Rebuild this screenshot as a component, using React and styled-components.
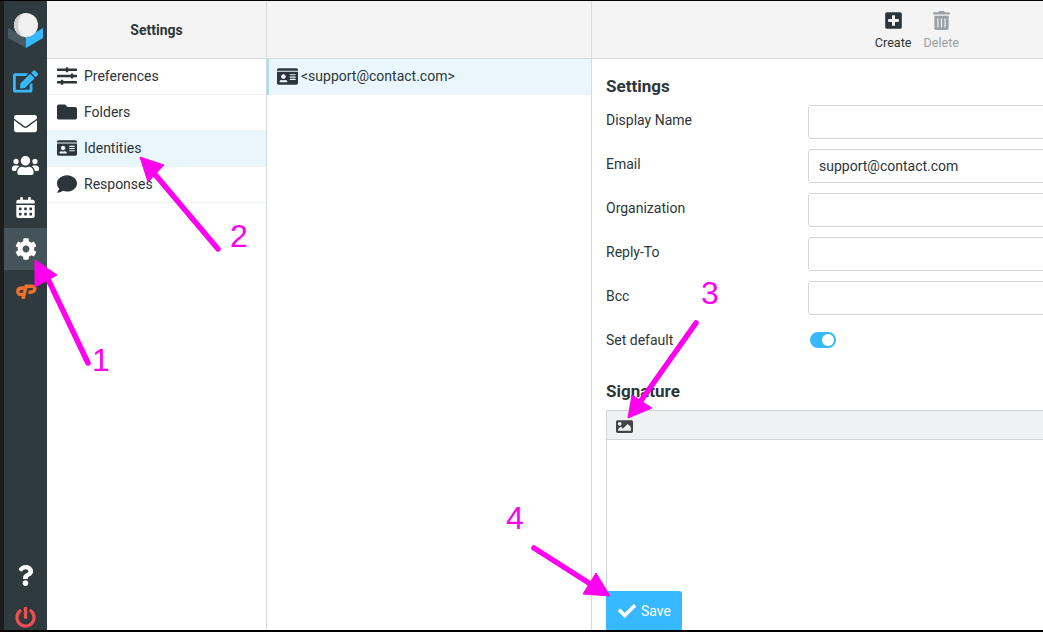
import styled, { createGlobalStyle } from "styled-components";
import {
  FaSlidersH,
  FaFolder,
  FaIdCard,
  FaComment,
  FaEdit,
  FaEnvelope,
  FaUsers,
  FaCalendarAlt,
  FaCog,
  FaQuestion,
  FaPowerOff,
  FaPlusSquare,
  FaTrashAlt,
  FaImage,
  FaCheck,
} from "react-icons/fa";

const GlobalStyle = createGlobalStyle`
  html, body { margin: 0; padding: 0; background: #fff; }
  body { font-family: Roboto, "Liberation Sans", sans-serif; font-size: 14px; color: #2c363a; }
  * { box-sizing: border-box; }
`;

const settingsItems = [
  { label: "Preferences", Icon: FaSlidersH },
  { label: "Folders", Icon: FaFolder },
  { label: "Identities", Icon: FaIdCard, active: true },
  { label: "Responses", Icon: FaComment },
];

const formRows = [
  { label: "Display Name", value: "" },
  { label: "Email", value: "support@contact.com" },
  { label: "Organization", value: "" },
  { label: "Reply-To", value: "" },
  { label: "Bcc", value: "" },
];

const Logo = () => (
  <svg width="36" height="36" viewBox="0 0 36 36">
    <path d="M0 16 L18 26 L18 36 L0 26 Z" fill="#4a5a62" />
    <path d="M18 26 L35 16 L35 26 L18 36 Z" fill="#37b9ff" />
    <circle cx="18" cy="13" r="12" fill="#f0f0f0" />
    <path d="M6 15 L18 26 L30 15 Z" fill="#f0f0f0" />
    <path d="M15 1.4 A12 12 0 0 0 15 24.6 A16 16 0 0 1 15 1.4 Z" fill="#cfcfcf" />
  </svg>
);

const CpanelLogo = () => (
  <CpanelMark width="21" height="15" viewBox="0 0 21 15" fill="none" stroke="#f0702c" strokeWidth="3.4">
    <path d="M9 4 H6 Q2 4 1.8 7.4 Q1.7 10.6 5.4 10.6 H7.6" />
    <path d="M7 15 L10.2 2.2 H15.6 Q19.4 2.2 18.8 5.2 Q18.2 8.2 14.6 8.2 H12.4" />
  </CpanelMark>
);

const Annotations = () => (
  <ArrowLayer width="1043" height="632" viewBox="0 0 1043 632">
    <g fill="#ff00ee" stroke="#ff00ee">
      <line x1="88" y1="363" x2="47" y2="277" strokeWidth="5.5" strokeLinecap="round" />
      <polygon points="35,260 57,275 35,287" strokeWidth="1" />
      <line x1="218" y1="249" x2="153" y2="172" strokeWidth="5.5" strokeLinecap="round" />
      <polygon points="140,157 164,165 148,182" strokeWidth="1" />
      <line x1="696" y1="323" x2="640" y2="402" strokeWidth="5.5" strokeLinecap="round" />
      <polygon points="628,418 632,395 652,408" strokeWidth="1" />
      <line x1="534" y1="548" x2="592" y2="585" strokeWidth="5.5" strokeLinecap="round" />
      <polygon points="610,596 596,573 583,594" strokeWidth="1" />
    </g>
  </ArrowLayer>
);

const App = () => {
  return (
    <>
      <GlobalStyle />
      <Screen>
        <Sidebar>
          <LogoSlot>
            <Logo />
          </LogoSlot>
          <NavButton $color="#37b9ff"><FaEdit size={25} /></NavButton>
          <NavButton><FaEnvelope size={23} /></NavButton>
          <NavButton><FaUsers size={27} /></NavButton>
          <NavButton><FaCalendarAlt size={21} /></NavButton>
          <NavButton $active><FaCog size={22} /></NavButton>
          <NavButton><CpanelLogo /></NavButton>
          <SidebarFooter>
            <NavButton><FaQuestion size={21} /></NavButton>
            <NavButton $color="#ef4f4f" $short><FaPowerOff size={21} /></NavButton>
          </SidebarFooter>
        </Sidebar>

        <MenuColumn>
          <MenuHeader>Settings</MenuHeader>
          {settingsItems.map(({ label, Icon, active }) => (
            <MenuRow key={label} $active={active}>
              <MenuIcon><Icon size={20} /></MenuIcon>
              {label}
            </MenuRow>
          ))}
        </MenuColumn>

        <ListColumn>
          <ListHeader />
          <IdentityRow>
            <FaIdCard size={21} />
            &lt;support@contact.com&gt;
          </IdentityRow>
        </ListColumn>

        <DetailColumn>
          <Toolbar>
            <ToolButton>
              <FaPlusSquare size={19} />
              Create
            </ToolButton>
            <ToolButton $disabled>
              <FaTrashAlt size={19} />
              Delete
            </ToolButton>
          </Toolbar>
          <FormArea>
            <SectionTitle>Settings</SectionTitle>
            {formRows.map((row) => (
              <FormRow key={row.label}>
                <FieldLabel>{row.label}</FieldLabel>
                <TextBox>{row.value}</TextBox>
              </FormRow>
            ))}
            <ToggleRow>
              <FieldLabel>Set default</FieldLabel>
              <Toggle />
            </ToggleRow>
            <SignatureTitle>Signature</SignatureTitle>
            <Editor>
              <EditorBar><FaImage size={17} /></EditorBar>
            </Editor>
            <SaveButton>
              <FaCheck size={18} />
              Save
            </SaveButton>
          </FormArea>
        </DetailColumn>

        <Annotations />
        <StepNumber $x={92} $y={341}>1</StepNumber>
        <StepNumber $x={230} $y={217}>2</StepNumber>
        <StepNumber $x={701} $y={274}>3</StepNumber>
        <StepNumber $x={506} $y={499}>4</StepNumber>
      </Screen>
    </>
  );
};

const Screen = styled.div`
  position: relative;
  display: flex;
  width: 1043px;
  height: 632px;
  overflow: hidden;
  background: #fff;
  border-top: 1px solid #000;
  border-bottom: 2px solid #000;
`;

const Sidebar = styled.nav`
  display: flex;
  flex-direction: column;
  flex: 0 0 47px;
  background: #2f3a3f;
  border-left: 4px solid #1c1c1c;
`;

const LogoSlot = styled.div`
  display: flex;
  justify-content: center;
  align-items: flex-start;
  height: 59px;
  padding-top: 11px;
`;

const NavButton = styled.div`
  display: flex;
  align-items: center;
  justify-content: center;
  height: ${(p) => (p.$short ? "34px" : "42px")};
  padding-top: ${(p) => (p.$short ? "8px" : "0")};
  color: ${(p) => p.$color || "#fff"};
  background: ${(p) => (p.$active ? "#45545b" : "transparent")};
`;

const CpanelMark = styled.svg`
  margin-left: 2px;
`;

const SidebarFooter = styled.div`
  margin-top: auto;
`;

const MenuColumn = styled.section`
  flex: 0 0 220px;
  border-right: 1px solid #d4dbde;
`;

const MenuHeader = styled.div`
  display: flex;
  align-items: center;
  justify-content: center;
  height: 58px;
  font-weight: 700;
  background: #f4f4f4;
  border-bottom: 1px solid #d4dbde;
`;

const MenuRow = styled.div`
  display: flex;
  align-items: center;
  height: 36px;
  padding-left: 10px;
  padding-bottom: 2px;
  background: ${(p) => (p.$active ? "#e9f6fc" : "#fff")};
  border-bottom: 1px solid #f0f3f4;
`;

const MenuIcon = styled.span`
  display: flex;
  justify-content: center;
  width: 20px;
  margin-right: 7px;
`;

const ListColumn = styled.section`
  flex: 0 0 325px;
  border-right: 1px solid #d4dbde;
`;

const ListHeader = styled.div`
  height: 58px;
  background: #f4f4f4;
  border-bottom: 1px solid #d4dbde;
`;

const IdentityRow = styled.div`
  display: flex;
  align-items: center;
  gap: 3px;
  height: 36px;
  padding-left: 8px;
  padding-bottom: 2px;
  background: #e9f6fc;
  border-left: 2px solid #a5dcf2;
`;

const DetailColumn = styled.section`
  flex: 1;
  min-width: 0;
`;

const Toolbar = styled.div`
  display: flex;
  justify-content: flex-end;
  gap: 12px;
  height: 58px;
  padding: 10px 84px 0 0;
  background: #f4f4f4;
  border-bottom: 1px solid #d4dbde;
`;

const ToolButton = styled.div`
  display: flex;
  flex-direction: column;
  align-items: center;
  gap: 5px;
  font-size: 12.6px;
  color: ${(p) => (p.$disabled ? "#9aa0a3" : "#2c363a")};
`;

const FormArea = styled.div`
  padding: 18px 0 0 14px;
`;

const SectionTitle = styled.h2`
  margin: 0 0 9px;
  font-size: 17px;
  line-height: 19px;
  font-weight: 700;
`;

const FormRow = styled.div`
  display: flex;
  height: 34px;
  margin-bottom: 10px;
`;

const FieldLabel = styled.div`
  flex: 0 0 202px;
  padding-top: 7px;
  line-height: 16px;
`;

const TextBox = styled.div`
  flex: 0 0 400px;
  height: 34px;
  padding: 0 10px;
  line-height: 32px;
  background: #fff;
  border: 1px solid #d0d5d8;
  border-radius: 3px;
`;

const ToggleRow = styled.div`
  display: flex;
  height: 30px;
`;

const Toggle = styled.div`
  position: relative;
  width: 26px;
  height: 16px;
  margin: 7px 0 0 2px;
  border-radius: 8px;
  background: #37b9ff;

  &::after {
    content: "";
    position: absolute;
    top: 2px;
    right: 2px;
    width: 12px;
    height: 12px;
    border-radius: 50%;
    background: #fff;
  }
`;

const SignatureTitle = styled.h2`
  margin: 27px 0 9px;
  font-size: 17px;
  line-height: 19px;
  font-weight: 700;
`;

const Editor = styled.div`
  width: 600px;
  height: 181px;
  border: 1px solid #d0d5d8;
  border-bottom: 0;
`;

const EditorBar = styled.div`
  display: flex;
  align-items: center;
  height: 29px;
  padding: 2px 0 0 9px;
  color: #444;
  background: #f0f1f2;
  border-bottom: 1px solid #d0d5d8;
`;

const SaveButton = styled.button`
  display: flex;
  align-items: center;
  gap: 5px;
  width: 76px;
  height: 40px;
  padding: 0 0 0 12px;
  font: 14px Roboto, "Liberation Sans", sans-serif;
  color: #fff;
  background: #37b9ff;
  border: 0;
  border-radius: 3px;
`;

const ArrowLayer = styled.svg`
  position: absolute;
  top: -1px;
  left: 0;
  pointer-events: none;
`;

const StepNumber = styled.span`
  position: absolute;
  top: ${(p) => p.$y}px;
  left: ${(p) => p.$x}px;
  font: 32px/36px "Liberation Sans", Arial, sans-serif;
  color: #ff00ee;
`;

export default App;
